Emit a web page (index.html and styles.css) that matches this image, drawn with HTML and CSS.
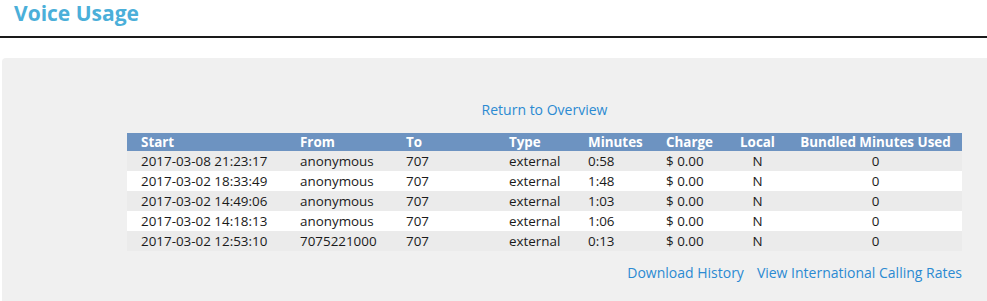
FILE: index.html
```html
<!DOCTYPE html>
<html lang="en">
<head>
<meta charset="utf-8">
<title>Voice Usage</title>
<link rel="stylesheet" href="styles.css">
</head>
<body>
<header class="page-head">
  <h1 class="title">Voice Usage</h1>
</header>
<main class="panel">
  <div class="content">
    <div class="overview"><a href="#" class="link">Return to Overview</a></div>
    <table class="usage">
      <thead>
        <tr>
          <th class="c-start">Start</th>
          <th class="c-from">From</th>
          <th class="c-to">To</th>
          <th class="c-type">Type</th>
          <th class="c-min">Minutes</th>
          <th class="c-charge">Charge</th>
          <th class="c-local center">Local</th>
          <th class="c-bundled center">Bundled Minutes Used</th>
        </tr>
      </thead>
      <tbody>
        <tr><td>2017-03-08 21:23:17</td><td>anonymous</td><td>707</td><td>external</td><td>0:58</td><td>$ 0.00</td><td class="center">N</td><td class="center">0</td></tr>
        <tr><td>2017-03-02 18:33:49</td><td>anonymous</td><td>707</td><td>external</td><td>1:48</td><td>$ 0.00</td><td class="center">N</td><td class="center">0</td></tr>
        <tr><td>2017-03-02 14:49:06</td><td>anonymous</td><td>707</td><td>external</td><td>1:03</td><td>$ 0.00</td><td class="center">N</td><td class="center">0</td></tr>
        <tr><td>2017-03-02 14:18:13</td><td>anonymous</td><td>707</td><td>external</td><td>1:06</td><td>$ 0.00</td><td class="center">N</td><td class="center">0</td></tr>
        <tr><td>2017-03-02 12:53:10</td><td>7075221000</td><td>707</td><td>external</td><td>0:13</td><td>$ 0.00</td><td class="center">N</td><td class="center">0</td></tr>
      </tbody>
    </table>
    <div class="actions">
      <a href="#" class="link">Download History</a>
      <a href="#" class="link">View International Calling Rates</a>
    </div>
  </div>
</main>
</body>
</html>
```

FILE: styles.css
```css
html, body {
  margin: 0;
  padding: 0;
  background: #ffffff;
  font-family: "Open Sans", "DejaVu Sans", sans-serif;
  color: #1a1a1a;
}

.page-head {
  height: 36px;
  border-bottom: 2px solid #1a1a1a;
  box-sizing: content-box;
}

.title {
  margin: 0;
  padding: 0 0 0 14px;
  font-size: 21px;
  line-height: 27px;
  font-weight: 700;
  color: #4bafd9;
}

.panel {
  margin: 20px 0 0 2px;
  background: #f0f0f0;
  border-radius: 4px 0 0 0;
  height: 243px;
  overflow: hidden;
}

.content {
  width: 835px;
  margin-left: 125px;
  padding-top: 42px;
}

.overview {
  text-align: center;
  height: 33px;
  line-height: 18px;
}

.link {
  color: #2b8ad2;
  text-decoration: none;
  font-size: 14px;
}

.usage {
  width: 835px;
  border-collapse: collapse;
  table-layout: fixed;
  font-size: 13.4px;
}

.usage th {
  box-sizing: border-box;
  background: #6d93c1;
  color: #ffffff;
  font-weight: 700;
  text-align: left;
  height: 18px;
  padding: 0 14px;
  line-height: 18px;
  white-space: nowrap;
}

.usage td {
  height: 20px;
  padding: 0 14px;
  line-height: 20px;
  white-space: nowrap;
}

.usage tbody tr:nth-child(odd) {
  background: #ebebeb;
}

.usage tbody tr:nth-child(even) {
  background: #ffffff;
}

.usage .center {
  text-align: center;
}

.usage th.c-bundled {
  padding: 0;
}

.c-start { width: 159px; }
.c-from { width: 106px; }
.c-to { width: 103px; }
.c-type { width: 79px; }
.c-min { width: 78px; }
.c-charge { width: 74px; }
.c-local { width: 63px; }
.c-bundled { width: 173px; }

.actions {
  display: flex;
  justify-content: flex-end;
  gap: 13px;
  padding-top: 13px;
  line-height: 18px;
}
```
